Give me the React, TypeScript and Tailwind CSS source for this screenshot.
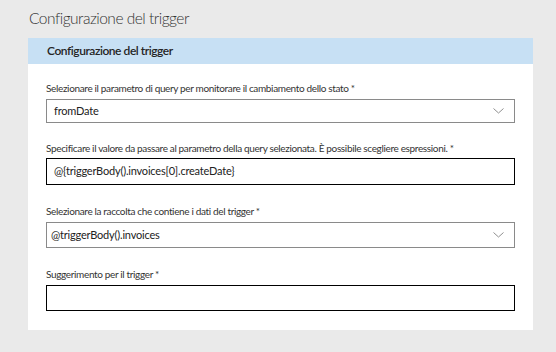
import React from "react";

const font = { fontFamily: 'Lato, "Segoe UI", sans-serif' };

function Chevron() {
  return (
    <svg width="11" height="6" viewBox="0 0 11 6" className="shrink-0">
      <path d="M0.5 0.5 L5.5 5 L10.5 0.5" fill="none" stroke="#8f8f8f" strokeWidth="1" />
    </svg>
  );
}

const label = "text-[10px] leading-[14px] text-[#333] whitespace-nowrap tracking-[-0.35px]";

export default function App() {
  return (
    <div className="w-[556px] h-[352px] bg-[#eaeaea] overflow-hidden" style={font}>
      <div className="pl-[29px] pt-[6px] h-[38px] text-[15.5px] font-light text-[#333] leading-[24px] tracking-[-0.5px]">
        Configurazione del trigger
      </div>
      <div className="ml-[28px] w-[505px] bg-white pb-[19px]">
        <div className="h-[26px] bg-[#c7e0f4] pl-[19px] flex items-center text-[12px] font-semibold text-[#252525] tracking-[-0.45px]">
          Configurazione del trigger
        </div>
        <div className="px-[18px] flex flex-col">
          <div className={"mt-[17px] " + label}>
            Selezionare il parametro di query per monitorare il cambiamento dello stato *
          </div>
          <div className="mt-[4px] h-[24px] border border-[#8a8a8a] flex items-center justify-between pl-[7px] pr-[10px] text-[11px] tracking-[-0.2px] text-[#222]">
            <span>fromDate</span>
            <Chevron />
          </div>
          <div className={"mt-[18px] " + label}>
            Specificare il valore da passare al parametro della query selezionata. È possibile scegliere espressioni. *
          </div>
          <div className="mt-[3px] h-[27px] border border-black flex items-center pl-[7px] text-[11px] tracking-[-0.2px] text-[#222]">
            @{"{"}triggerBody().invoices[0].createDate{"}"}
          </div>
          <div className={"mt-[19px] " + label}>
            Selezionare la raccolta che contiene i dati del trigger *
          </div>
          <div className="mt-[4px] h-[26px] border border-[#8a8a8a] flex items-center justify-between pl-[4px] pr-[10px] text-[11px] tracking-[-0.2px] text-[#222]">
            <span>@triggerBody().invoices</span>
            <Chevron />
          </div>
          <div className={"mt-[19px] " + label}>
            Suggerimento per il trigger *
          </div>
          <div className="mt-[4px] h-[26px] border border-black" />
        </div>
      </div>
    </div>
  );
}
